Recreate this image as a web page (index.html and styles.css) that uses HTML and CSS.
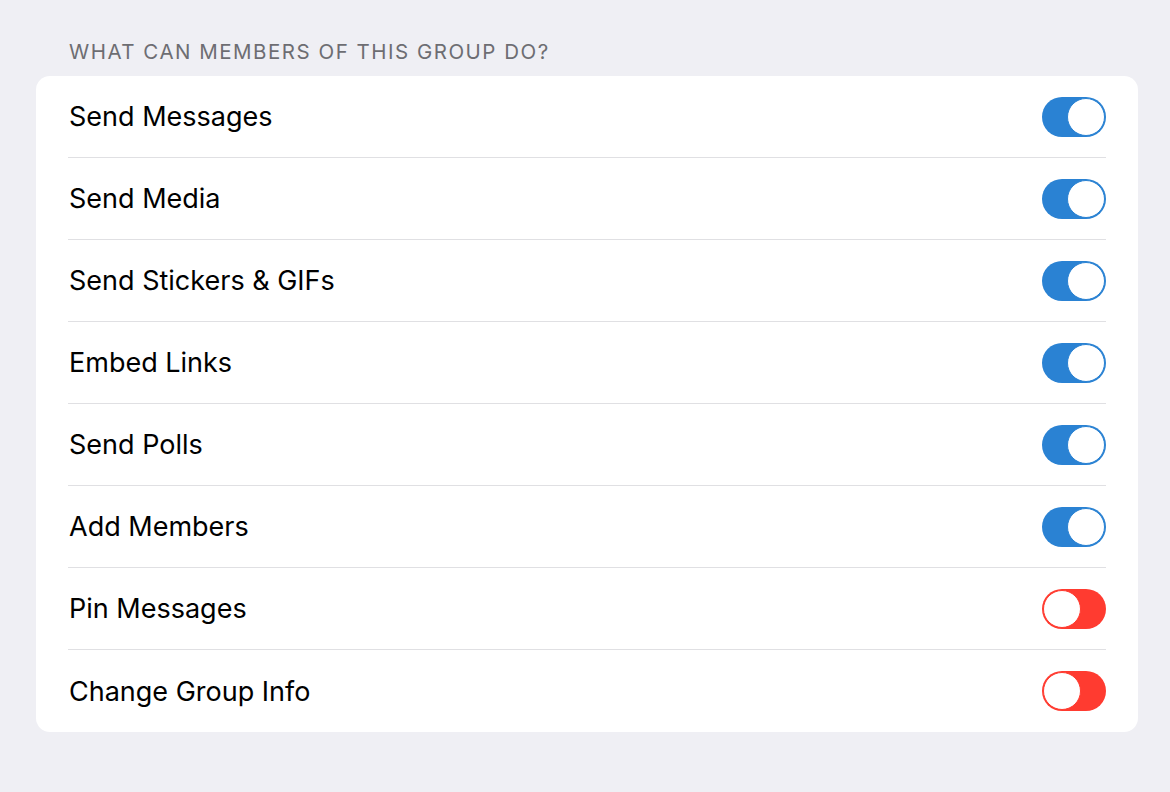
FILE: index.html
```html
<!DOCTYPE html>
<html>
<head>
<meta charset="utf-8">
<link rel="stylesheet" href="styles.css">
</head>
<body>
<div class="page">
  <div class="section-title">WHAT CAN MEMBERS OF THIS GROUP DO?</div>
  <div class="card">
    <div class="row"><span class="label">Send Messages</span><span class="toggle on"><span class="knob"></span></span></div>
    <div class="row"><span class="label">Send Media</span><span class="toggle on"><span class="knob"></span></span></div>
    <div class="row"><span class="label">Send Stickers &amp; GIFs</span><span class="toggle on"><span class="knob"></span></span></div>
    <div class="row"><span class="label">Embed Links</span><span class="toggle on"><span class="knob"></span></span></div>
    <div class="row"><span class="label">Send Polls</span><span class="toggle on"><span class="knob"></span></span></div>
    <div class="row"><span class="label">Add Members</span><span class="toggle on"><span class="knob"></span></span></div>
    <div class="row"><span class="label">Pin Messages</span><span class="toggle off"><span class="knob"></span></span></div>
    <div class="row"><span class="label">Change Group Info</span><span class="toggle off"><span class="knob"></span></span></div>
  </div>
</div>
</body>
</html>
```
FILE: styles.css
```css
html, body {
  margin: 0;
  padding: 0;
  background: #efeff4;
  font-family: Inter, "Liberation Sans", Arial, sans-serif;
}
.page {
  width: 1170px;
  height: 792px;
  padding: 38px 32px 0 36px;
  box-sizing: border-box;
}
.section-title {
  font-size: 20.5px;
  color: #6d6d72;
  padding-left: 33px;
  line-height: 28px;
  margin-bottom: 10px;
  letter-spacing: 1.5px;
}
.card {
  background: #fff;
  border-radius: 14px;
  padding: 0 32px 0 32px;
}
.row {
  height: 82px;
  display: flex;
  align-items: center;
  justify-content: space-between;
  border-bottom: 1px solid #e0e0e3;
  box-sizing: border-box;
}
.row:last-child {
  border-bottom: none;
}
.label {
  font-size: 27px;
  color: #000;
  padding-left: 1px;
}
.toggle {
  width: 64px;
  height: 40px;
  border-radius: 20px;
  display: flex;
  align-items: center;
  box-sizing: border-box;
  padding: 1px;
}
.toggle.on {
  background: #2a82d3;
  justify-content: flex-end;
}
.toggle.off {
  background: #ff3b30;
  justify-content: flex-start;
}
.knob {
  width: 38px;
  height: 38px;
  border-radius: 50%;
  background: #fff;
  box-sizing: border-box;
}
.toggle.on .knob { border: 1.5px solid #2a82d3; }
.toggle.off .knob { border: 1.5px solid #ff3b30; }
```
